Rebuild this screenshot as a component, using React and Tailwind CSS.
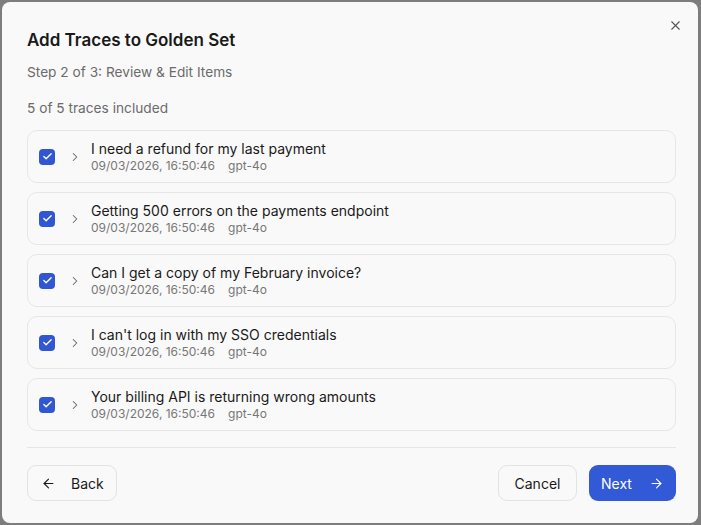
import { Check, ChevronRight, X, ArrowLeft, ArrowRight } from "lucide-react";

const traces = [
  "I need a refund for my last payment",
  "Getting 500 errors on the payments endpoint",
  "Can I get a copy of my February invoice?",
  "I can't log in with my SSO credentials",
  "Your billing API is returning wrong amounts",
];

export default function App() {
  return (
    <div
      className="w-[701px] h-[525px] bg-[#7d7d7d] pt-[2px] pl-[2px] overflow-hidden"
      style={{ fontFamily: "Inter, 'Noto Sans', sans-serif" }}
    >
      <div className="relative w-[696px] h-[521px] bg-[#f9f9f9] rounded-lg flex flex-col pl-[25px] pr-[22px]">
        <button className="absolute right-[15px] top-[16px] text-[#555]">
          <X size={15} strokeWidth={1.8} />
        </button>

        <h2 className="mt-[27px] text-[17px] leading-[22px] font-semibold text-[#1a1a1a]">
          Add Traces to Golden Set
        </h2>
        <p className="mt-[11px] text-[13.7px] leading-[20px] text-[#6b6b6b]">
          Step 2 of 3: Review &amp; Edit Items
        </p>
        <p className="mt-[16px] text-[13.7px] leading-[20px] text-[#6b6b6b]">
          5 of 5 traces included
        </p>

        <div className="mt-[12px] flex flex-col gap-[9px]">
          {traces.map((t) => (
            <div
              key={t}
              className="h-[53px] border border-[#e6e6e6] rounded-[10px] flex items-center pl-[11px]"
            >
              <div className="w-[16px] h-[16px] rounded-[4px] bg-[#3056d3] flex items-center justify-center">
                <Check size={11} strokeWidth={3} className="text-white" />
              </div>
              <ChevronRight size={14} strokeWidth={1.8} className="ml-[13px] text-[#666]" />
              <div className="ml-[9px] flex flex-col">
                <span className="text-[14px] leading-[18px] text-[#1a1a1a]">{t}</span>
                <span className="text-[12px] leading-[16px] text-[#777] flex gap-[13px]">
                  <span>09/03/2026, 16:50:46</span>
                  <span>gpt-4o</span>
                </span>
              </div>
            </div>
          ))}
        </div>

        <div className="mt-[16px] border-t border-[#e6e6e6]" />

        <div className="mt-[17px] flex items-center">
          <button className="h-[36px] w-[90px] pl-[13px] border border-[#e3e3e3] rounded-[9px] flex items-center gap-[15px] text-[14px] text-[#1a1a1a]">
            <ArrowLeft size={15} strokeWidth={1.8} />
            Back
          </button>
          <div className="ml-auto flex gap-[12px]">
            <button className="h-[36px] w-[79px] border border-[#e3e3e3] rounded-[9px] text-[14px] text-[#1a1a1a]">
              Cancel
            </button>
            <button className="h-[36px] w-[87px] pl-[12px] pr-[12px] rounded-[9px] bg-[#3259d6] text-white text-[14px] flex items-center justify-between">
              Next
              <ArrowRight size={15} strokeWidth={1.8} />
            </button>
          </div>
        </div>
      </div>
    </div>
  );
}
